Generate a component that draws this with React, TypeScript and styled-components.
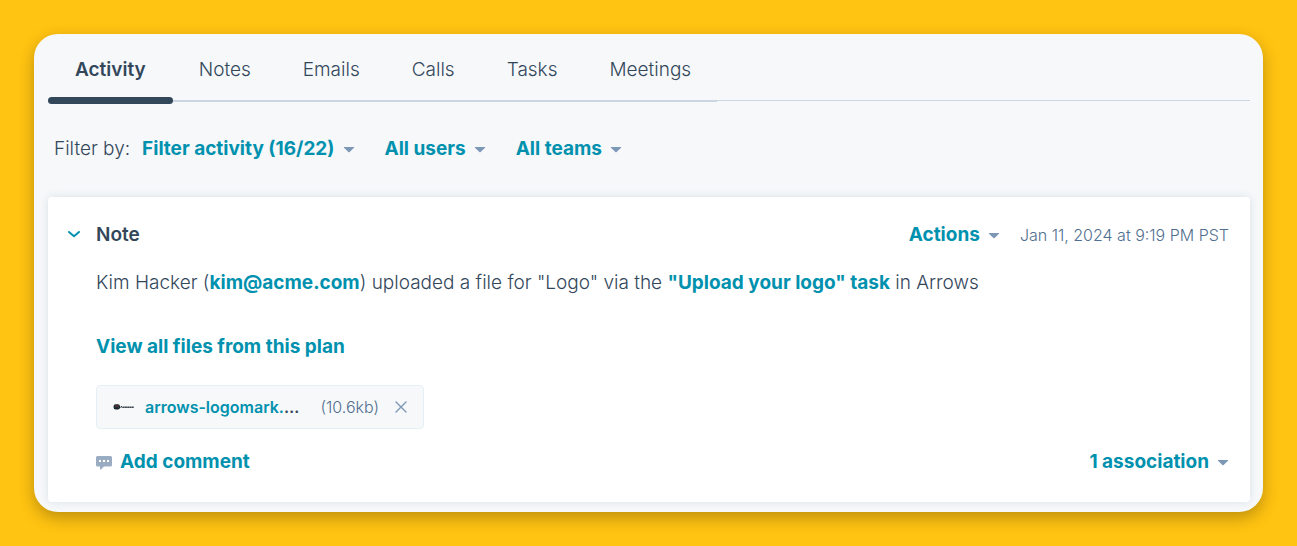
import React from "react";
import styled, { createGlobalStyle } from "styled-components";

const color = {
  page: "#ffc311",
  panel: "#f6f8fa",
  ink: "#33475b",
  link: "#0091ae",
  muted: "#516f90",
  caret: "#7c98b6",
  line: "#cbd6e2",
  soft: "#e5f0f5",
};

const GlobalStyle = createGlobalStyle`
  *, *::before, *::after { box-sizing: border-box; }
  body {
    margin: 0;
    background: ${color.page};
    color: ${color.ink};
    font-family: Inter, "Open Sans", sans-serif;
    font-size: 19px;
    font-weight: 300;
    line-height: 24px;
  }
  button { font: inherit; color: inherit; background: none; border: 0; padding: 0; cursor: pointer; }
`;

const Page = styled.main`
  padding: 34px;
`;

const Panel = styled.section`
  padding: 0 13px 10px 14px;
  background: ${color.panel};
  border-radius: 24px;
  box-shadow: 0 6px 16px rgba(0, 0, 0, 0.26);
`;

const TabBar = styled.nav`
  display: flex;
  align-items: flex-start;
`;

const TabList = styled.div`
  display: flex;
  height: 68px;
  border-bottom: 2px solid ${color.line};
`;

const TabRule = styled.div`
  flex: 1;
  height: 67px;
  border-bottom: 1px solid ${color.line};
`;

const Tab = styled.button<{ $active?: boolean }>`
  position: relative;
  padding: 6px ${(p) => (p.$active ? 27 : 26)}px 0;
  font-weight: ${(p) => (p.$active ? 600 : 300)};

  &::after {
    content: "";
    display: ${(p) => (p.$active ? "block" : "none")};
    position: absolute;
    left: 0;
    right: 0;
    bottom: -4px;
    height: 7px;
    border-radius: 4px;
    background: ${color.ink};
  }
`;

const Filters = styled.div`
  display: flex;
  align-items: center;
  gap: 30px;
  padding: 35px 6px 36px;
`;

const FilterLead = styled.div`
  display: flex;
  align-items: center;
  gap: 12px;
`;

const MenuButton = styled.button`
  display: flex;
  align-items: center;
  gap: 8px;
  color: ${color.link};
  font-weight: 700;
`;

const Card = styled.article`
  display: flex;
  gap: 15px;
  padding: 26px 21px 28px 19px;
  background: #fff;
  border-radius: 4px;
  box-shadow: 0 0 8px rgba(45, 62, 80, 0.12);
`;

const Toggle = styled.button`
  display: flex;
  align-items: center;
  width: 14px;
  height: 24px;
`;

const CardMain = styled.div`
  flex: 1;
  min-width: 0;
`;

const Row = styled.div`
  display: flex;
  align-items: center;
  justify-content: space-between;
`;

const Title = styled.h2`
  margin: 0;
  font-size: 19px;
  font-weight: 600;
`;

const Meta = styled.div`
  display: flex;
  align-items: center;
  gap: 20px;
`;

const Time = styled.time`
  color: ${color.muted};
  font-size: 16px;
`;

const Text = styled.p`
  margin: 24px 0 40px;
`;

const Link = styled.a`
  color: ${color.link};
  font-weight: 700;
  text-decoration: none;
`;

const Attachment = styled.div`
  display: flex;
  align-items: center;
  width: 328px;
  height: 44px;
  margin: 26px 0 21px;
  padding: 0 16px;
  background: ${color.panel};
  border: 1px solid ${color.soft};
  border-radius: 4px;
  font-size: 16px;
`;

const FileName = styled.div`
  flex: 1;
  margin-left: 10px;
  white-space: nowrap;
  font-weight: 600;

  a { font-weight: 600; }
`;

const FileSize = styled.span`
  margin-right: 16px;
  color: ${color.muted};
`;

const IconButton = styled.button`
  display: flex;
`;

const Comment = styled.button`
  display: flex;
  align-items: center;
  gap: 8px;
  color: ${color.link};
  font-weight: 700;
`;

const Caret = () => (
  <svg width="12" height="8" viewBox="0 0 12 8" aria-hidden="true">
    <path d="M1.2 2h9.6q.7.1.2.7L6.6 7q-.6.5-1.2 0L1 2.700Q.5 2.100 1.2 2z" fill={color.caret} />
  </svg>
);

const Menu = ({ children }: { children: React.ReactNode }) => (
  <MenuButton type="button" aria-haspopup="menu">
    {children}
    <Caret />
  </MenuButton>
);

const LogoThumb = () => (
  <svg width="22" height="8" viewBox="0 0 22 8" aria-hidden="true">
    <rect x="0.6" y="1.2" width="6.4" height="5.2" rx="2.2" fill="#16202a" />
    <path d="M2.600 2.200l1.300 1.400 1.300-1.400" stroke="#d8403a" strokeWidth=".8" fill="none" />
    <path d="M1.600 4.600l1.200-.8M6 4.600l-1.200-.8" stroke="#3f8f86" strokeWidth=".6" />
    <path d="M7.600 4.900l.9-1.900.9 1.900" stroke="#2b323a" strokeWidth=".9" fill="none" />
    <path d="M9.800 4.300h11.200" stroke="#3b424a" strokeWidth="1.500" strokeDasharray="1.9 .3" />
  </svg>
);

const tabs = ["Activity", "Notes", "Emails", "Calls", "Tasks", "Meetings"];

export default function App() {
  return (
    <>
      <GlobalStyle />
      <Page>
        <Panel>
          <TabBar>
            <TabList role="tablist">
              {tabs.map((name, i) => (
                <Tab key={name} type="button" role="tab" aria-selected={i === 0} $active={i === 0}>
                  {name}
                </Tab>
              ))}
            </TabList>
            <TabRule />
          </TabBar>

          <Filters>
            <FilterLead>
              <span>Filter by:</span>
              <Menu>Filter activity (16/22)</Menu>
            </FilterLead>
            <Menu>All users</Menu>
            <Menu>All teams</Menu>
          </Filters>

          <Card>
            <Toggle type="button" aria-label="Collapse note" aria-expanded="true">
              <svg width="14" height="10" viewBox="0 0 14 10" fill="none" aria-hidden="true">
                <path d="M2 2l5 4.300L12 2" stroke={color.link} strokeWidth="2" strokeLinecap="round" strokeLinejoin="round" />
              </svg>
            </Toggle>
            <CardMain>
              <Row>
                <Title>Note</Title>
                <Meta>
                  <Menu>Actions</Menu>
                  <Time dateTime="2024-01-11T21:19-08:00">Jan 11, 2024 at 9:19 PM PST</Time>
                </Meta>
              </Row>
              <Text>
                Kim Hacker (<Link href="mailto:kim@acme.com">kim@acme.com</Link>) uploaded a file for "Logo" via the{" "}
                <Link href="#task">"Upload your logo" task</Link> in Arrows
              </Text>
              <Link href="#files">View all files from this plan</Link>
              <Attachment>
                <LogoThumb />
                <FileName>
                  <Link href="#file">arrows-logomark.</Link>…
                </FileName>
                <FileSize>(10.6kb)</FileSize>
                <IconButton type="button" aria-label="Remove file">
                  <svg width="12" height="12" viewBox="0 0 12 12" aria-hidden="true">
                    <path d="M1 1l10 10M11 1L1 11" stroke={color.caret} strokeWidth="1.4" strokeLinecap="round" />
                  </svg>
                </IconButton>
              </Attachment>
              <Row>
                <Comment type="button">
                  <svg width="16" height="15" viewBox="0 0 16 15" aria-hidden="true">
                    <path
                      d="M1.5 1h13Q16 1 16 2.500v7.500Q16 11.500 14.500 11.500H8l-3.200 3Q4 15 4 14V11.500H1.500Q0 11.500 0 10V2.500Q0 1 1.500 1z"
                      fill="#99acc2"
                    />
                    <path d="M3 5h2v2H3zM7 5h2v2H7zM11 5h2v2h-2z" fill="#fff" />
                  </svg>
                  Add comment
                </Comment>
                <Menu>1 association</Menu>
              </Row>
            </CardMain>
          </Card>
        </Panel>
      </Page>
    </>
  );
}
